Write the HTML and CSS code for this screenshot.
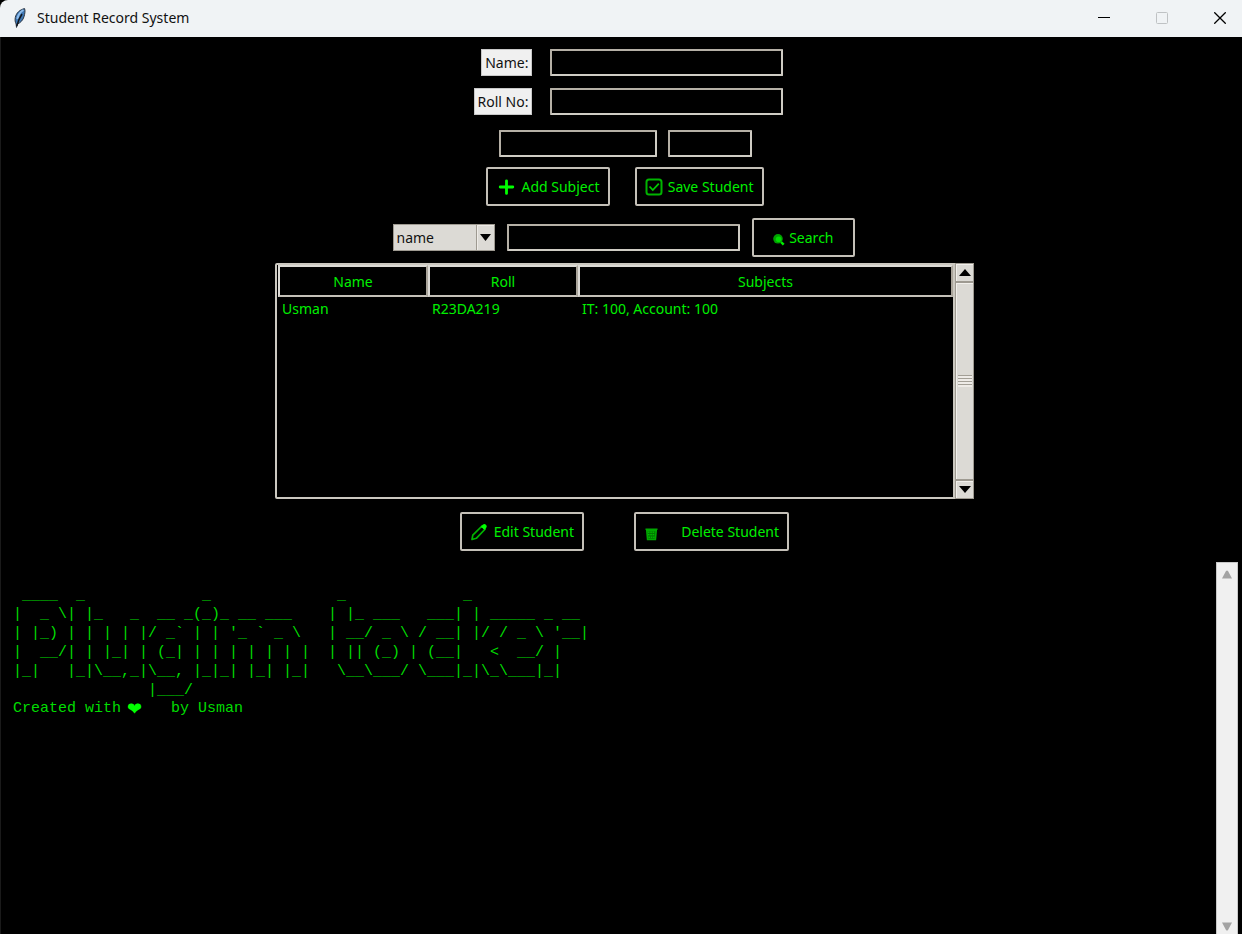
FILE: index.html
```html
<!DOCTYPE html>
<html lang="en">
<head>
<meta charset="utf-8">
<title>Student Record System</title>
<link rel="stylesheet" href="styles.css">
</head>
<body>
<header class="titlebar">
  <svg class="feather" width="14" height="20" viewBox="0 0 14 20" aria-hidden="true">
    <path d="M11.600.6C7 1.600 3.200 4.800 2.300 9.500c-.4 2.300-.3 4.500.8 6.400l.4 3.500.8-3.400c3.400-1.200 5.700-4 6.700-7.300C11.800 6 12.400 3 11.600.6z" fill="#3f78b5" stroke="#2b3440" stroke-width="1"/>
    <path d="M10.500 2C7 4 5 7 4.300 11" fill="none" stroke="#8fbdec" stroke-width="2"/>
    <path d="M9 6C7 9 5 13 3.800 18" fill="none" stroke="#10151c" stroke-width="1.500"/>
  </svg>
  <h1 class="title">Student Record System</h1>
  <div class="window-controls">
    <button class="window-button" aria-label="Minimize"><svg width="12" height="12" viewBox="0 0 12 12"><path d="M0 5.500h12" stroke="#000"/></svg></button>
    <button class="window-button" aria-label="Maximize" disabled><svg width="12" height="12" viewBox="0 0 12 12"><rect x=".5" y=".5" width="11" height="11" rx="1" fill="none" stroke="#bfc2c4"/></svg></button>
    <button class="window-button" aria-label="Close"><svg width="12" height="12" viewBox="0 0 12 12"><path d="M.3.3l11.400 11.400M11.700.3L.3 11.700" stroke="#000" stroke-width="1.300"/></svg></button>
  </div>
</header>
<main class="app">
  <form class="records">
    <div class="identity">
      <label class="label" for="student-name">Name:</label>
      <input class="entry" id="student-name" type="text">
      <label class="label" for="roll-no">Roll No:</label>
      <input class="entry" id="roll-no" type="text">
    </div>
    <div class="subject-row">
      <input class="entry entry-subject" type="text" aria-label="Subject">
      <input class="entry entry-marks" type="text" aria-label="Marks">
    </div>
    <div class="button-row button-row-add">
      <button class="button button-narrow" type="button">
        <svg width="20" height="16" viewBox="0 0 20 16" aria-hidden="true"><path d="M10.500 1.800v12.600M4.200 8h12.600" stroke="#0f0" stroke-width="2.800" stroke-linecap="round"/></svg>
        Add Subject
      </button>
      <button class="button button-medium" type="button">
        <svg width="18" height="18" viewBox="0 0 18 18" aria-hidden="true"><rect x="1.500" y="1.500" width="15" height="15" rx="2.500" fill="none" stroke="#00b400" stroke-width="2"/><path d="M4.500 8.500l3.300 3.500 6-6.300" fill="none" stroke="#00c800" stroke-width="1.800"/></svg>
        Save Student
      </button>
    </div>
    <div class="search-row">
      <div class="combo">
        <select class="combo-select" aria-label="Search by"><option>name</option><option>roll</option></select>
        <span class="combo-arrow" aria-hidden="true"><svg width="11" height="7" viewBox="0 0 11 7"><path d="M0 0h11L5.500 7z"/></svg></span>
      </div>
      <input class="entry" type="search" aria-label="Search text">
      <button class="button button-search" type="button">
        <svg width="12" height="16" viewBox="0 0 12 16" aria-hidden="true"><path d="M6.500 10.500l4.200 4.200" stroke="#00f000" stroke-width="2.400"/><circle cx="5" cy="8.800" r="4.800" fill="#00a000"/><circle cx="5.600" cy="9.200" r="2.800" fill="#00dc00"/></svg>
        Search
      </button>
    </div>
    <div class="tree">
      <div class="tree-frame">
        <table class="table">
          <colgroup><col class="col-name"><col class="col-roll"><col></colgroup>
          <thead><tr><th>Name</th><th>Roll</th><th>Subjects</th></tr></thead>
          <tbody><tr><td>Usman</td><td>R23DA219</td><td>IT: 100, Account: 100</td></tr></tbody>
        </table>
      </div>
      <div class="scrollbar" aria-hidden="true">
        <span class="scroll-arrow"><svg width="12" height="7" viewBox="0 0 12 7"><path d="M0 7h12L6 0z"/></svg></span>
        <span class="scroll-thumb"><span class="scroll-grip"></span></span>
        <span class="scroll-arrow"><svg width="12" height="7" viewBox="0 0 12 7"><path d="M0 0h12L6 7z"/></svg></span>
      </div>
    </div>
    <div class="button-row button-row-edit">
      <button class="button button-narrow" type="button">
        <svg width="18" height="18" viewBox="0 0 18 18" aria-hidden="true"><path d="M2 16.500l.8-4.300L12 3l3.200 3L6.300 15.300z" fill="none" stroke="#00b400" stroke-width="1.700" stroke-linejoin="round"/><path d="M11 3.500L13 1.600c.9-.8 2-.7 2.900.1.900.9 1.200 2 .3 3l-1.800 2.200z" fill="#0f0"/></svg>
        Edit Student
      </button>
      <button class="button button-delete" type="button">
        <svg width="14" height="18" viewBox="0 0 14 18" aria-hidden="true"><path d="M1.500 6.200h12M2.800 7.500h9.400l-.8 9H3.600z" fill="#007800" stroke="#00a800" stroke-width="1.600"/><path d="M4 9.200h7M4 11.700h7M4.500 14.200h6" stroke="#00d000" stroke-dasharray="1.500 .8"/></svg>
        Delete Student
      </button>
    </div>
  </form>
  <section class="console">
    <div class="console-text">
<pre class="banner"> ____  _             _              _             _
|  _ \| |_   _  __ _(_)_ __ ___    | |_ ___   ___| | _____ _ __
| |_) | | | | |/ _` | | '_ ` _ \   | __/ _ \ / __| |/ / _ \ '__|
|  __/| | |_| | (_| | | | | | | |  | || (_) | (__|   &lt;  __/ |
|_|   |_|\__,_|\__, |_|_| |_| |_|   \__\___/ \___|_|\_\___|_|
               |___/</pre>
      <p class="credit"><span>Created with</span><span class="heart">❤</span><span>by Usman</span></p>
    </div>
    <div class="console-scroll" aria-hidden="true">
      <svg width="12" height="9" viewBox="0 0 12 9"><path d="M1 8.500L5 1q1-1 2 0l4 7.500z" fill="#a3a3a3"/></svg>
      <svg width="12" height="9" viewBox="0 0 12 9"><path d="M1 .5L5 8q1 1 2 0L11 .5z" fill="#a3a3a3"/></svg>
    </div>
  </section>
</main>
</body>
</html>
```
FILE: styles.css
```css
* { box-sizing: border-box; }

body {
  margin: 0;
  min-height: 100vh;
  display: flex;
  flex-direction: column;
  background: #000;
  color: #00f000;
  font: 14px/20px "Noto Sans", "Open Sans", sans-serif;
}

button, input, select { font: inherit; color: inherit; margin: 0; }

.titlebar {
  height: 37px;
  display: flex;
  align-items: center;
  padding: 0 0 2px 13px;
  gap: 10px;
  background: #f0f3f5;
  border-top-left-radius: 8px;
  color: #111;
}
.title { margin: 0; flex: 1; font-size: 14px; font-weight: 400; }
.window-controls { display: flex; align-self: stretch; gap: 14px; }
.window-button {
  width: 44px;
  padding: 0;
  border: 0;
  background: none;
  display: grid;
  place-items: center;
}

.app {
  flex: 1;
  display: flex;
  flex-direction: column;
  border-left: 1px solid #1a1a1a;
}

.records {
  display: flex;
  flex-direction: column;
  align-items: center;
  padding: 12px 0 11px 6px;
}

.identity {
  display: grid;
  grid-template-columns: auto auto;
  gap: 12px 18px;
  justify-items: end;
  padding-left: 8px;
}
.label {
  height: 27px;
  padding: 3px 3px;
  border: 1px solid #c8c8c8;
  background: #f0f0f0;
  color: #111;
}

.entry {
  width: 233px;
  height: 27px;
  padding: 2px 4px;
  border: 2px solid #c9c6bd;
  border-color: #b5b0a6 #cfccc4 #cfccc4 #b5b0a6;
  border-radius: 1px;
  background: #000;
  outline: 0;
  appearance: none;
}
.entry-subject { width: 158px; }
.entry-marks { width: 84px; }

.subject-row { display: flex; gap: 11px; margin-top: 15px; padding-left: 2px; }

.button-row { display: flex; }
.button-row-add { gap: 25px; margin-top: 10px; }
.button-row-edit { gap: 50px; margin-top: 13px; }

.button {
  height: 39px;
  padding: 0 8px;
  display: flex;
  align-items: center;
  justify-content: space-between;
  border: 2px solid #c4c0b8;
  border-radius: 2px;
  background: #000;
  white-space: nowrap;
}
.button-narrow { width: 124px; }
.button-medium { width: 129px; }
.button-search { width: 103px; padding: 0 19px; }
.button-delete { width: 155px; }

.search-row {
  display: flex;
  align-items: center;
  gap: 12px;
  margin-top: 12px;
  padding-right: 2px;
}

.combo { display: grid; width: 102px; height: 27px; }
.combo-select, .combo-arrow { grid-area: 1 / 1; }
.combo-select {
  appearance: none;
  width: 100%;
  padding: 0 20px 0 3px;
  border: 1px solid #9e9a91;
  border-radius: 0;
  background: #dcdad5;
  color: #111;
}
.combo-arrow {
  justify-self: end;
  width: 19px;
  display: grid;
  place-items: center;
  border: 1px solid #9e9a91;
  box-shadow: inset 1px 1px #eeebe7;
  pointer-events: none;
}

.tree { display: flex; width: 699px; max-width: 100%; height: 236px; margin-top: 6px; }
.tree-frame {
  flex: 1;
  padding: 0 0 0 1px;
  border: 2px solid #cbc8c0;
  border-radius: 2px 0 0 2px;
}
.table { width: 100%; table-layout: fixed; border-collapse: separate; border-spacing: 0; }
.col-name, .col-roll { width: 150px; }
.table th {
  height: 32px;
  padding: 1px 0 0;
  border: 2px solid #c4c0b8;
  border-color: #dcdad5 #aaa59b #c4c0b8 #dcdad5;
  font-weight: 400;
  text-align: center;
}
.table td { height: 24px; padding: 0 4px; }

.scrollbar {
  width: 19px;
  display: flex;
  flex-direction: column;
  border: 1px solid #9e9a91;
  background: #dcdad5;
}
.scroll-arrow { height: 17px; display: grid; place-items: center; box-shadow: inset 1px 1px #f2f0ec; }
.scroll-thumb {
  flex: 1;
  display: grid;
  place-items: center;
  border: solid #9e9a91;
  border-width: 2px 0;
  box-shadow: inset 1px 1px #f2f0ec;
}
.scroll-grip {
  width: 14px;
  height: 12px;
  background: repeating-linear-gradient(#a39f96 0 1px, #eeebe7 1px 3px);
}

.console { flex: 1; display: flex; padding-right: 4px; }
.console-text {
  flex: 1;
  padding: 24px 0 0 12px;
  color: #00dc00;
  font: 15px/19px "Liberation Mono", monospace;
}
.banner { margin: 0; font: inherit; }
.credit { margin: 0; display: flex; height: 17px; line-height: 17px; }
.heart {
  width: 50px;
  padding-left: 6px;
  color: #0f0;
  font-family: "DejaVu Sans", sans-serif;
  font-size: 18px;
}
.console-scroll {
  width: 22px;
  display: flex;
  flex-direction: column;
  justify-content: space-between;
  align-items: center;
  padding: 7px 0 3px;
  border: 1px solid #c8c8c8;
  border-bottom: 0;
  background: #f0f0f0;
}
```
